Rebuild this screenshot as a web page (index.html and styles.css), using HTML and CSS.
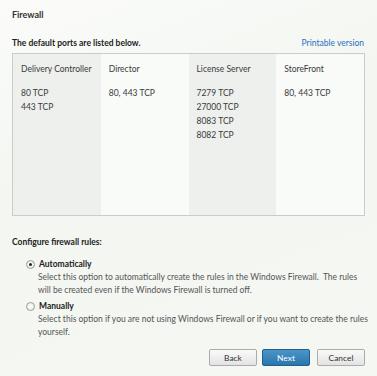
FILE: index.html
```html
<!DOCTYPE html>
<html lang="en">
<head>
    <meta charset="UTF-8">
    <title>Firewall</title>
    <link rel="stylesheet" href="styles.css">
</head>
<body>
    <div class="page">
        <h1 class="title">Firewall</h1>
        <div class="ports-head">
            <p>The default ports are listed below.</p>
            <a href="#" class="print">Printable version</a>
        </div>
        <div class="ports">
            <div class="col shade">
                <p class="name">Delivery Controller</p>
                <p>80 TCP</p>
                <p>443 TCP</p>
            </div>
            <div class="col">
                <p class="name">Director</p>
                <p>80, 443 TCP</p>
            </div>
            <div class="col shade">
                <p class="name">License Server</p>
                <p>7279 TCP</p>
                <p>27000 TCP</p>
                <p>8083 TCP</p>
                <p>8082 TCP</p>
            </div>
            <div class="col">
                <p class="name">StoreFront</p>
                <p>80, 443 TCP</p>
            </div>
        </div>
        <p class="section">Configure firewall rules:</p>
        <div class="options">
            <label class="option">
                <span class="radio checked"></span>
                <span class="label">Automatically</span>
            </label>
            <p class="desc">Select this option to automatically create the rules in the Windows Firewall.&nbsp; The rules will be created even if the Windows Firewall is turned off.</p>
            <label class="option">
                <span class="radio"></span>
                <span class="label">Manually</span>
            </label>
            <p class="desc">Select this option if you are not using Windows Firewall or if you want to create the rules yourself.</p>
        </div>
        <div class="buttons">
            <button>Back</button>
            <button class="primary">Next</button>
            <button class="cancel">Cancel</button>
        </div>
    </div>
</body>
</html>
```

FILE: styles.css
```css
* {
    box-sizing: border-box;
}

body {
    margin: 0;
    width: 377px;
    height: 376px;
    overflow: hidden;
    font-family: Lato, "Open Sans", sans-serif;
    font-size: 8.5px;
    color: #3a3a3a;
    background: linear-gradient(160deg, #fbfcfa 0%, #f3f6f1 40%, #f5f7f3 100%);
}

p {
    margin: 0;
}

.page {
    padding: 9px 12px 0 12px;
}

.title {
    margin: 0;
    font-size: 9px;
    font-weight: 700;
    color: #333;
    line-height: 12px;
}

.ports-head {
    margin-top: 16px;
    display: flex;
    justify-content: space-between;
    align-items: baseline;
    line-height: 12px;
}

.ports-head p {
    font-weight: 700;
    color: #222;
}

.print {
    color: #2a6fc0;
    text-decoration: none;
    margin-right: 1px;
}

.ports {
    margin-top: 4px;
    height: 163px;
    display: flex;
    border: 1px solid #c9ccc8;
    background: #f9fbf9;
}

.col {
    flex: 1;
    padding: 8px 8px 0 8px;
    line-height: 14px;
}

.col.shade {
    background: #eef0ed;
}

.col .name {
    margin-bottom: 10px;
}

.section {
    margin-top: 20px;
    font-weight: 700;
    color: #222;
    line-height: 12px;
}

.options {
    margin-top: 10px;
    padding-left: 14px;
}

.option {
    display: flex;
    align-items: center;
    gap: 4px;
    line-height: 13px;
}

.option .label {
    font-weight: 700;
    color: #222;
}

.radio {
    width: 9px;
    height: 9px;
    border-radius: 50%;
    border: 1px solid #9a9d9a;
    background: radial-gradient(circle, #fff 0%, #e3e5e3 100%);
    display: flex;
    align-items: center;
    justify-content: center;
}

.radio.checked::after {
    content: "";
    width: 3px;
    height: 3px;
    border-radius: 50%;
    background: #222;
}

.desc {
    padding-left: 12px;
    margin-right: -4px;
    line-height: 13px;
    color: #555;
    margin-bottom: 3px;
}

.buttons {
    margin-top: 10px;
    display: flex;
    justify-content: flex-end;
    gap: 5px;
}

.buttons button {
    width: 48px;
    height: 17px;
    padding: 0;
    font-family: inherit;
    font-size: 8.4px;
    color: #333;
    border: 1px solid #a9aca9;
    border-radius: 2px;
    background: linear-gradient(#fafafa, #e2e3e2);
}

.buttons button.primary {
    color: #fff;
    border-color: #1e5f8f;
    background: linear-gradient(#4b95c7, #2a77ad);
}

.buttons button.cancel {
    margin-left: 2px;
}
```
